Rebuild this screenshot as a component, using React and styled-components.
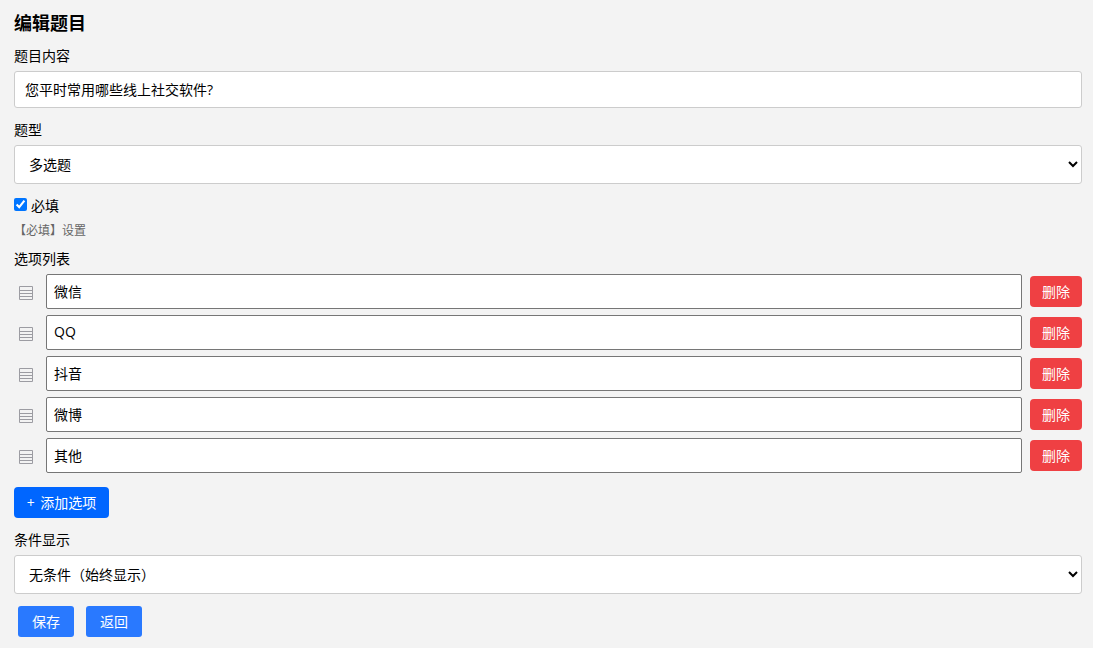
import React, { useState } from 'react';
import styled, { createGlobalStyle } from 'styled-components';

const GlobalStyle = createGlobalStyle`
  * {
    box-sizing: border-box;
  }
  body {
    margin: 0;
    background: #f3f3f3;
    color: #000;
    font-size: 14px;
    font-family: "Open Sans", "Noto Sans CJK SC", sans-serif;
  }
`
const Container = styled.div`
  padding: 10px 11px 11px 14px;
`
const Title = styled.h3`
  margin: 0 0 10px;
  font-size: 18px;
  line-height: 26px;
  font-weight: bold;
`
const Field = styled.div`
  margin-bottom: 12px;
`
const Label = styled.label`
  display: block;
  height: 20px;
  line-height: 20px;
  margin-bottom: 5px;
`
const TextInput = styled.input`
  display: block;
  width: 100%;
  height: 37px;
  padding: 0 10px 2px;
  border: 1px solid #ccc;
  border-radius: 3px;
  background: white;
  color: #000;
  font: inherit;
`
const Select = styled.select`
  display: block;
  width: 100%;
  height: 39px;
  padding: 0 0 0 10px;
  border: 1px solid #ccc;
  border-radius: 3px;
  background: white;
  color: #000;
  font: inherit;
`
const CheckLabel = styled.label`
  display: flex;
  align-items: center;
  height: 20px;
  line-height: 20px;
`
const Checkbox = styled.input`
  width: 13px;
  height: 13px;
  margin: 0 4px 3px 0;
`
const Hint = styled.div`
  height: 18px;
  margin: 5px 0 10px;
  font-size: 12px;
  line-height: 19px;
  color: #666;
`
const OptionList = styled.div`
  display: flex;
  flex-direction: column;
  gap: 6px;
  margin-bottom: 14px;
`
const OptionRow = styled.div`
  display: flex;
  align-items: center;
  gap: 8px;
  height: 35px;
`
const Handle = styled.span`
  display: flex;
  width: 24px;
  padding: 2px 0 0 5px;
  cursor: move;
`
const OptionInput = styled.input`
  flex: 1;
  min-width: 0;
  height: 35px;
  padding: 0 7px 2px;
  border: 1px solid #767676;
  border-radius: 2px;
  background: white;
  color: #000;
  font: inherit;
`
const Button = styled.button`
  display: block;
  width: ${props => props.$width}px;
  height: 31px;
  padding: 0 0 2px;
  border: none;
  border-radius: ${props => props.$radius || 4}px;
  background: ${props => props.$color};
  color: white;
  font: inherit;
  word-spacing: 2px;
  cursor: pointer;
`
const Footer = styled.div`
  display: flex;
  gap: 12px;
  padding-left: 4px;
`

const HandleIcon = () => (
  <svg width="14" height="14" viewBox="0 0 14 14" fill="none" stroke="#9c9ca2">
    <path d="M.5 .5h13v13H.5zM1 4.5h12M1 7.5h12M1 10.5h12" />
  </svg>
)

const App = () => {
  const [options, setOptions] = useState(['微信', 'QQ', '抖音', '微博', '其他']);

  const changeOption = (idx, value) => {
    setOptions(options.map((v, i) => (i === idx ? value : v)));
  }
  const removeOption = (idx) => {
    setOptions(options.filter((v, i) => i !== idx));
  }

  return (
    <>
      <GlobalStyle />
      <Container>
        <Title>编辑题目</Title>
        <Field>
          <Label>题目内容</Label>
          <TextInput defaultValue="您平时常用哪些线上社交软件?" />
        </Field>
        <Field>
          <Label>题型</Label>
          <Select>
            <option>多选题</option>
          </Select>
        </Field>
        <CheckLabel>
          <Checkbox type="checkbox" defaultChecked />
          <span>必填</span>
        </CheckLabel>
        <Hint>【必填】设置</Hint>
        <Label>选项列表</Label>
        <OptionList>
          {options.map((v, idx) => (
            <OptionRow key={idx}>
              <Handle><HandleIcon /></Handle>
              <OptionInput value={v} onChange={e => changeOption(idx, e.target.value)} />
              <Button $width={52} $color="#ef4043" onClick={() => removeOption(idx)}>删除</Button>
            </OptionRow>
          ))}
        </OptionList>
        <Field>
          <Button $width={95} $color="#0066ff" onClick={() => setOptions([...options, ''])}>+ 添加选项</Button>
        </Field>
        <Field>
          <Label>条件显示</Label>
          <Select>
            <option>无条件（始终显示）</option>
          </Select>
        </Field>
        <Footer>
          <Button $width={56} $radius={3} $color="#2979ff">保存</Button>
          <Button $width={56} $radius={3} $color="#2979ff">返回</Button>
        </Footer>
      </Container>
    </>
  )
}

export default App
